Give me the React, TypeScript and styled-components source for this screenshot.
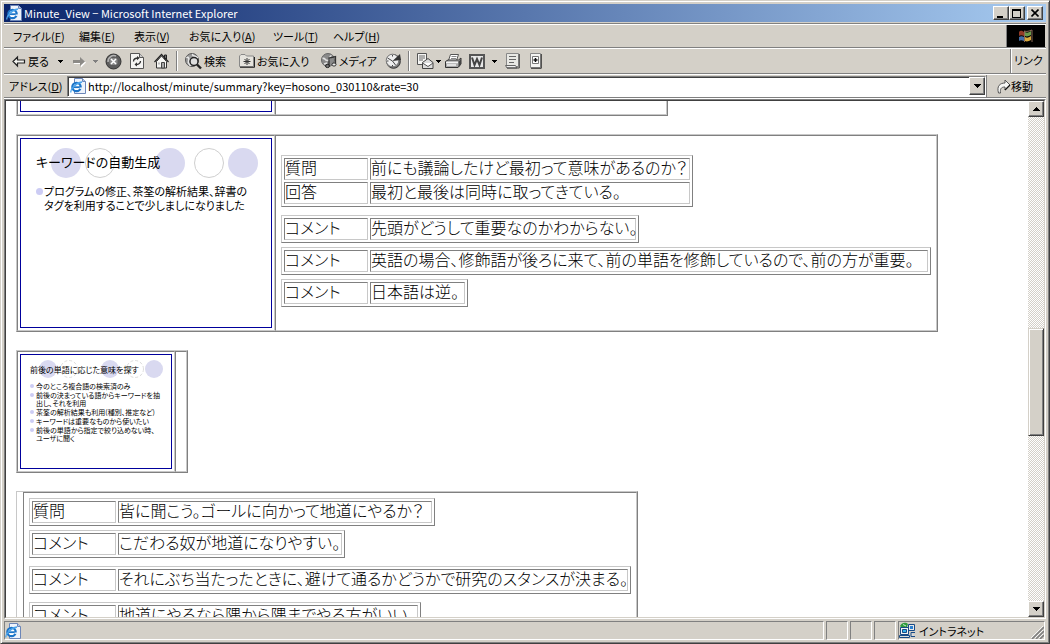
import React from "react";
import styled, { createGlobalStyle } from "styled-components";

const face = "#d4d0c8";
const shadow = "#808080";
const dark = "#404040";
const light = "#c8c8c8";

const GlobalStyle = createGlobalStyle`
  * { box-sizing: border-box; }
  body {
    margin: 0;
    background: ${face};
    color: #000;
    font-family: "Noto Sans CJK JP", sans-serif;
    font-size: 11px;
    font-feature-settings: "palt";
  }
  button, input { font: inherit; color: inherit; font-feature-settings: inherit; }
  button { padding: 0; margin: 0; border: 0; background: none; }
  svg { display: block; flex: none; }
`;

const Window = styled.div`
  display: flex;
  flex-direction: column;
  height: 100vh;
  padding: 2px;
  background: ${face};
  border: 1px solid;
  border-color: ${face} ${dark} ${dark} ${face};
  box-shadow: inset 1px 1px #fff, inset -1px -1px ${shadow};
  overflow: hidden;
`;

const Frame = styled.div`
  display: flex;
  flex-direction: column;
  flex: 1;
  min-height: 0;
  padding: 1px;
`;

const TitleBar = styled.header`
  display: flex;
  align-items: center;
  flex: none;
  height: 18px;
  margin-bottom: 1px;
  padding: 0 3px 0 2px;
  gap: 2px;
  color: #fff;
  background: linear-gradient(to right, #0a246a, #a6caf0);
`;

const Title = styled.h1`
  flex: 1;
  margin: 0;
  font-size: 11px;
  font-weight: normal;
  line-height: 18px;
`;

const Raised = styled.button<{ $w: number; $h: number }>`
  display: flex;
  align-items: center;
  justify-content: center;
  flex: none;
  width: ${(p) => p.$w}px;
  height: ${(p) => p.$h}px;
  background: ${face};
  border: 1px solid;
  border-color: #fff ${dark} ${dark} #fff;
  box-shadow: inset -1px -1px ${shadow};
`;

const WindowButtons = styled.div`
  display: flex;
  & > :last-child { margin-left: 2px; }
`;

const Band = styled.div<{ $h: number }>`
  display: flex;
  align-items: center;
  flex: none;
  height: ${(p) => p.$h}px;
  padding-right: 1px;
  border-top: 1px solid #fff;
  border-bottom: 1px solid ${shadow};
`;

const Bands = styled.div`
  flex: none;
  border-top: 1px solid ${shadow};
  border-bottom: 1px solid #fff;
`;

const Menu = styled.nav`
  display: flex;
  flex: 1;
  padding-left: 9px;
`;

const MenuItem = styled.button<{ $w: number }>`
  width: ${(p) => p.$w}px;
  height: 20px;
  line-height: 18px;
  text-align: left;
  white-space: nowrap;
`;

const Throbber = styled.div`
  display: flex;
  align-items: center;
  justify-content: center;
  width: 39px;
  height: 22px;
  background: #000;
  border-left: 1px solid ${shadow};
`;

const Tools = styled.div`
  display: flex;
  align-items: center;
  flex: 1;
  padding-left: 8px;
`;

const Tool = styled.button<{ $w: number }>`
  display: flex;
  align-items: center;
  flex: none;
  gap: 2px;
  width: ${(p) => p.$w}px;
  height: 22px;
  line-height: 22px;
  white-space: nowrap;
`;

const Divider = styled.div`
  width: 2px;
  height: 20px;
  margin-right: 7px;
  border-left: 1px solid ${shadow};
  border-right: 1px solid #fff;
`;

const Links = styled.div`
  width: 35px;
  height: 24px;
  padding-left: 3px;
  line-height: 22px;
  white-space: nowrap;
  border-left: 1px solid ${shadow};
  box-shadow: inset 1px 0 #fff;
`;

const AddressLabel = styled.label`
  width: 63px;
  padding-left: 5px;
  line-height: 20px;
  white-space: nowrap;
`;

const Combo = styled.div`
  display: flex;
  align-items: center;
  flex: 1;
  height: 21px;
  padding-left: 2px;
  gap: 2px;
  background: #fff;
  border: 1px solid;
  border-color: ${shadow} #fff #fff ${shadow};
  box-shadow: inset 1px 1px ${dark};
`;

const AddressInput = styled.input`
  flex: 1;
  min-width: 0;
  height: 19px;
  padding: 0;
  border: 0;
  outline: 0;
  background: transparent;
`;

const Go = styled.button`
  display: flex;
  align-items: center;
  width: 59px;
  height: 22px;
  padding-left: 10px;
  border-left: 1px solid ${shadow};
`;

const View = styled.div`
  display: flex;
  flex: 1;
  min-height: 0;
  border: 1px solid;
  border-color: ${shadow} #fff #fff ${shadow};
`;

const ViewInner = styled.div`
  display: flex;
  flex: 1;
  min-width: 0;
  border: 1px solid;
  border-color: ${dark} ${face} ${face} ${dark};
  background: #fff;
`;

const Page = styled.main`
  display: flex;
  flex-direction: column;
  align-items: flex-start;
  flex: 1;
  min-width: 0;
  gap: 18px;
  padding-left: 10px;
  overflow: hidden;
`;

const ScrollBar = styled.div`
  display: flex;
  flex-direction: column;
  width: 16px;
  background: repeating-conic-gradient(#fff 0 25%, ${face} 0 50%) 0 0 / 2px 2px;
`;

const ScrollTrack = styled.div`
  display: grid;
  flex: 1;
  grid-template-rows: 211fr 109fr 165fr;
`;

const ScrollThumb = styled.div`
  grid-row: 2;
  background: ${face};
  border: 1px solid;
  border-color: ${face} ${dark} ${dark} ${face};
  box-shadow: inset 1px 1px #fff, inset -1px -1px ${shadow};
`;

/* One minutes entry: slide thumbnail on the left, remarks on the right. */
const Entry = styled.section<{ $cut?: boolean }>`
  display: flex;
  flex: none;
  border: 1px solid;
  border-color: ${light} ${shadow} ${shadow} ${light};
  border-top-width: ${(p) => (p.$cut ? 0 : 1)}px;
`;

const Cell = styled.div<{ $cut?: boolean }>`
  padding: 2px;
  border: 1px solid;
  border-color: ${shadow} ${light} ${light} ${shadow};
  ${(p) => p.$cut && "border-top: 0; padding-top: 0;"}
`;

const EmptyCell = styled.div<{ $w: number }>`
  width: ${(p) => p.$w}px;
`;

const Remarks = styled(Cell)<{ $top: number; $right: number }>`
  display: flex;
  flex-direction: column;
  align-items: flex-start;
  padding: ${(p) => p.$top}px ${(p) => p.$right}px 5px 5px;
`;

const Remark = styled.table<{ $w: number; $gap?: number }>`
  table-layout: fixed;
  width: ${(p) => p.$w}px;
  margin-bottom: ${(p) => p.$gap ?? 4}px;
  border: 1px solid;
  border-color: ${light} ${shadow} ${shadow} ${light};
  border-collapse: separate;
  border-spacing: 2px;
  font-size: 16px;
  line-height: 16px;
  white-space: nowrap;

  th, td {
    height: 22px;
    padding: 0 0 4px;
    border: 1px solid;
    border-color: ${shadow} ${light} ${light} ${shadow};
    font-weight: 300;
    text-align: left;
  }
  th { width: 84px; }
`;

const Slide = styled.article<{ $w: number; $h: number; $cut?: boolean }>`
  display: grid;
  width: ${(p) => p.$w}px;
  height: ${(p) => p.$h}px;
  border: 1px solid #00009c;
  ${(p) => p.$cut && "border-top: 0;"}
  background: #fff;
  white-space: nowrap;
  overflow: hidden;

  & > * { grid-area: 1 / 1; }
`;

const SlideText = styled.div<{ $small?: boolean }>`
  padding: ${(p) => (p.$small ? "10px 0 0 9px" : "13px 0 0 15px")};
`;

const SlideTitle = styled.h2<{ $small?: boolean }>`
  margin: 0;
  font-size: ${(p) => (p.$small ? 8 : 13)}px;
  line-height: ${(p) => (p.$small ? 10 : 20)}px;
  font-weight: 400;
`;

const Bullets = styled.ul<{ $small?: boolean }>`
  margin: ${(p) => (p.$small ? "7px 0 0 0" : "12px 0 0 0")};
  padding: 0;
  list-style: none;
  font-size: ${(p) => (p.$small ? 7 : 11)}px;
  line-height: ${(p) => (p.$small ? 8 : 14)}px;
  font-weight: 400;
`;

const Bullet = styled.li<{ $small?: boolean }>`
  display: flex;
  gap: ${(p) => (p.$small ? 2 : 1)}px;
  margin-bottom: ${(p) => (p.$small ? 1 : 0)}px;
  &::before {
    content: "";
    flex: none;
    width: ${(p) => (p.$small ? 4 : 7)}px;
    height: ${(p) => (p.$small ? 4 : 7)}px;
    margin-top: ${(p) => (p.$small ? 2 : 4)}px;
    border-radius: 50%;
    background: #ccccf4;
  }
`;

const StatusBar = styled.footer`
  display: flex;
  flex: none;
  gap: 2px;
  height: 21px;
  padding: 2px 1px 0 0;
`;

const Panel = styled.div<{ $w?: number }>`
  display: flex;
  align-items: center;
  flex: ${(p) => (p.$w ? "none" : "1")};
  width: ${(p) => (p.$w ? p.$w + "px" : "auto")};
  gap: 3px;
  line-height: 16px;
  white-space: nowrap;
  border: 1px solid;
  border-color: ${shadow} #fff #fff ${shadow};

  & > :nth-child(3) { margin-left: auto; align-self: flex-end; }
`;

const Caret = ({ color = "#000", up = false }: { color?: string; up?: boolean }) => (
  <svg width="7" height="4" viewBox="0 0 7 4" shapeRendering="crispEdges">
    <path d={up ? "M3 0h1v1h1v1h1v1h1v1H0V3h1V2h1V1h1z" : "M0 0h7v1H6v1H5v1H4v1H3V3H2V2H1V1H0z"} fill={color} />
  </svg>
);

const SmallCaret = ({ color = "#000" }: { color?: string }) => (
  <svg width="5" height="3" viewBox="0 0 5 3" shapeRendering="crispEdges">
    <path d="M0 0h5v1H4v1H3v1H2V2H1V1H0z" fill={color} />
  </svg>
);

const PageIcon = () => (
  <svg width="16" height="16" viewBox="0 0 16 16">
    <path d="M4.500.5h8l3 3v12h-11z" fill="#eef3fb" stroke="#6c86b8" />
    <path d="M12.500.5v3h3" fill="#b7c9e8" stroke="#6c86b8" />
    <circle cx="6.500" cy="9" r="4.200" fill="#fff" stroke="#1c74c8" strokeWidth="2.200" />
    <path d="M3 9.200h8" stroke="#1c74c8" strokeWidth="1.800" />
    <path d="M9.500 10.200h3" stroke="#eef3fb" strokeWidth="1.400" />
    <path d="M1 14.500C0 12 5 5 12 4" fill="none" stroke="#4aa4ec" strokeWidth="1.300" />
  </svg>
);

const Arrow = ({ back = false }: { back?: boolean }) => (
  <svg width="14" height="13" viewBox="0 0 14 13">
    {back ? (
      <path d="M1 6.500 5.500 2v3h7v3h-7v3z" fill="#f4f4f0" stroke="#222" strokeWidth="1.200" />
    ) : (
      <>
        <path d="M14 7.500 9 3v3H2v3h7v3.500z" fill="#fff" />
        <path d="M13 6.500 8 2v3H1v3h7v3z" fill="#8c8a86" />
      </>
    )}
  </svg>
);

const StopIcon = () => (
  <svg width="17" height="17" viewBox="0 0 17 17">
    <circle cx="8.500" cy="8.500" r="7.500" fill="#5c5c5c" stroke="#333" />
    <path d="M3 9a6 6 0 0 1 8-6" fill="none" stroke="#b4b4b4" strokeWidth="1.500" />
    <rect x="4.500" y="5" width="8" height="7" rx="2" fill="#8a8a8a" />
    <path d="m6 6 5 5m0-5-5 5" stroke="#fff" strokeWidth="1.500" />
  </svg>
);

const RefreshIcon = () => (
  <svg width="14" height="16" viewBox="0 0 14 16">
    <path d="M.5.5h9l4 4v11H.5z" fill="#f4f4f2" stroke="#555" />
    <path d="M9.500.5v4h4" fill="#ccc" stroke="#555" />
    <path d="M3.500 8.500c0-3 2-3.500 5-3.500M10.500 8c0 3-2 3.500-5 3.500" fill="none" stroke="#333" strokeWidth="1.300" />
    <path d="m7 3 2.500 2L7 7.200zM7 9.300 4.500 11.500 7 13.600z" fill="#333" />
  </svg>
);

const HomeIcon = () => (
  <svg width="15" height="16" viewBox="0 0 15 16">
    <path d="M10.500 2h2v4h-2z" fill="#777" stroke="#222" />
    <path d="M2.500 8.500 7.500 3l5 5.500v6.500h-10z" fill="#f5f5f2" stroke="#333" />
    <path d="M.5 9 7.500 1.500 14.500 9" fill="none" stroke="#222" strokeWidth="1.200" />
    <path d="M7.500 9.500h3V15h-3z" fill="#aaa" stroke="#444" />
    <path d="M4 9.500h2v2H4z" fill="#bbb" />
  </svg>
);

const SearchIcon = () => (
  <svg width="17" height="17" viewBox="0 0 17 17">
    <circle cx="7" cy="7" r="6.500" fill="#999" stroke="#555" />
    <path d="M1.500 5c2-2 3 1 2 3s1 3 2 5M8 1c-2 2 4 2 5 4" fill="none" stroke="#e8e8e8" strokeWidth="1.500" />
    <circle cx="9" cy="8.500" r="4" fill="#dedede" stroke="#222" strokeWidth="1.400" />
    <path d="m12 11.500 4 4" stroke="#222" strokeWidth="2.400" />
  </svg>
);

const FavoritesIcon = () => (
  <svg width="16" height="14" viewBox="0 0 16 14">
    <path d="M.5 12.500V2L2 .5h4L7.500 2h7v10.500z" fill="#e6e4de" stroke="#888" />
    <path d="M1 13.300h14.500V3" fill="none" stroke="#222" />
    <path d="M8 4v7M4.500 7.500h7M5.500 5l5 5m0-5-5 5" stroke="#333" />
  </svg>
);

const MediaIcon = () => (
  <svg width="16" height="16" viewBox="0 0 16 16">
    <circle cx="7" cy="7" r="6.500" fill="#8a8a8a" stroke="#666" />
    <path d="M1.500 5.500c3-1 2 2 5 2s1-4 4-5M3 11l3-1" fill="none" stroke="#e0e0e0" strokeWidth="1.600" />
    <path d="M8 12.500V5l6.500-1.500v8" fill="none" stroke="#333" strokeWidth="1.300" />
    <ellipse cx="6.500" cy="13" rx="2" ry="1.600" fill="#777" stroke="#222" />
    <ellipse cx="13" cy="11.500" rx="2" ry="1.600" fill="#eee" stroke="#333" />
  </svg>
);

const HistoryIcon = () => (
  <svg width="17" height="16" viewBox="0 0 17 16">
    <circle cx="8.500" cy="8.500" r="6.800" fill="#777" stroke="#333" />
    <circle cx="7.500" cy="7.500" r="6.300" fill="#eee" stroke="#777" />
    <path d="M7.500 8 15 1l1 6z" fill="#333" />
    <path d="m7.500 8-5-3M7.500 8l3 4M7.500 2v1.500M7.500 12v1.500M2 8h1.500" stroke="#444" />
  </svg>
);

const MailIcon = () => (
  <svg width="17" height="16" viewBox="0 0 17 16">
    <path d="M.5.5h9v11h-9z" fill="#f6f6f4" stroke="#555" />
    <path d="M2 3h6M2 5h6M2 7h4" stroke="#666" />
    <path d="M5.500 9.500 11 5.500l5 4v6H5.500z" fill="#ddd" stroke="#444" />
    <path d="m5.500 10 5.500 3.500L16 10" fill="#fff" stroke="#555" />
  </svg>
);

const PrintIcon = () => (
  <svg width="17" height="15" viewBox="0 0 17 15">
    <path d="M5.500.5h8l-2 6h-8z" fill="#fff" stroke="#555" />
    <path d="M6.500 2.500h5M6 4.500h5" stroke="#888" />
    <path d="M.5 7.500 3 6h10.500l2.500-2v6l-3 3.500H.5z" fill="#aaa" stroke="#333" />
    <path d="M1 8.500h12M2 11h9" stroke="#f3f3f3" strokeWidth="1.500" />
    <path d="M13.500 7.500v6l2.500-3V5z" fill="#444" />
  </svg>
);

const WordIcon = () => (
  <svg width="16" height="15" viewBox="0 0 16 15">
    <path d="M0 0h16v15H0z" fill="#555" />
    <path d="M2 2h12v11H2z" fill="#e8e8e8" />
    <path d="m3 3.500 2.500 7.500L8 5l2.500 6L13 3.500" fill="none" stroke="#444" strokeWidth="2" />
  </svg>
);

const DiscussIcon = () => (
  <svg width="15" height="16" viewBox="0 0 15 16">
    <path d="M1.500.5h12v13h-12z" fill="#e8e8e4" stroke="#888" />
    <path d="M.5 12.500h10l1.500 2.500H2z" fill="#eee" stroke="#666" />
    <path d="M14.300 1v14H2" fill="none" stroke="#444" />
    <path d="M4 3.500h7M4 6.500h7M4 9.500h5" stroke="#666" />
  </svg>
);

const MessengerIcon = () => (
  <svg width="12" height="16" viewBox="0 0 12 16">
    <path d="M.5.5h10v14H.5z" fill="#f4f4f2" stroke="#888" />
    <path d="M11.300 1v14.300H1" fill="none" stroke="#333" />
    <path d="M2.500 3.500h6v7h-6z" fill="#fff" stroke="#777" />
    <path d="M5.500 5v4M3.500 7h4" stroke="#111" strokeWidth="1.500" />
  </svg>
);

const GoIcon = () => (
  <svg width="14" height="15" viewBox="0 0 14 15">
    <path d="M1.500 14C-.5 7 3 4 8 4V1l5 5-5 5V8C4 8 3 10 3.500 14z" fill="#f6f6f4" stroke="#555" />
    <path d="m8 11 5-5" stroke="#111" strokeWidth="1.300" />
  </svg>
);

const FlagIcon = () => (
  <svg width="20" height="16" viewBox="0 0 20 16">
    <path d="M3 4c2-2 3-1 5 0v4c-2-1-4-1-5 0z" fill="#b84830" opacity=".8" />
    <path d="M9 4c2 1 3 1 6-1v4c-2 1-4 2-6 1z" fill="#6a9a4c" />
    <path d="M3 9c2-1 3-1 5 0v4c-2-1-4-1-5 0z" fill="#4a78b8" opacity=".9" />
    <path d="M9 9c2 1 3 1 6-1v4c-2 1-4 2-6 1z" fill="#d8a83c" />
    <path d="M8 3c3 1 5 0 8-1v12M8.500 3v11" fill="none" stroke="#8a6a58" />
  </svg>
);

const IntranetIcon = () => (
  <svg width="17" height="17" viewBox="0 0 17 17">
    <path d="M1 4C3 0 7 0 9 2L8 5H2z" fill="#2f9a3c" />
    <path d="M4 2.500 7 4" stroke="#c6ecd0" />
    <path d="M9.500 2.500h6v6h-6z" fill="#e8e8e8" stroke="#174a86" />
    <path d="M11 4h3v3h-3z" fill="#2a7fd0" />
    <path d="M1.500 5.500h8v7h-8z" fill="#f2f2f2" stroke="#174a86" />
    <path d="M3.500 7.500h4v3h-4z" fill="#38b0e8" stroke="#174a86" />
    <path d="M.5 13.500h10v2H.5zM12 10.500h4M12 10.500v4h4" fill="#ddd" stroke="#174a86" />
  </svg>
);

const Grip = () => (
  <svg width="13" height="13" viewBox="0 0 13 13">
    <path d="M1 13 13 1M5 13l8-8M9 13l4-4" stroke="#808080" strokeWidth="1.600" />
    <path d="M0 12 12 0M4 12l8-8M8 12l4-4" stroke="#fff" strokeWidth=".8" />
  </svg>
);

const menus = [
  { label: "ファイル", key: "F", w: 66 },
  { label: "編集", key: "E", w: 55 },
  { label: "表示", key: "V", w: 55 },
  { label: "お気に入り", key: "A", w: 84 },
  { label: "ツール", key: "T", w: 60 },
  { label: "ヘルプ", key: "H", w: 60 },
];

type Table = { w: number; gap?: number; rows: [string, string][] };

const keywordRemarks: Table[] = [
  {
    w: 412,
    gap: 8,
    rows: [
      ["質問", "前にも議論したけど最初って意味があるのか？"],
      ["回答", "最初と最後は同時に取ってきている。"],
    ],
  },
  { w: 358, rows: [["コメント", "先頭がどうして重要なのかわからない。"]] },
  { w: 650, rows: [["コメント", "英語の場合、修飾語が後ろに来て、前の単語を修飾しているので、前の方が重要。"]] },
  { w: 187, rows: [["コメント", "日本語は逆。"]] },
];

const stanceRemarks: Table[] = [
  { w: 406, rows: [["質問", "皆に聞こう。ゴールに向かって地道にやるか？"]] },
  { w: 316, gap: 8, rows: [["コメント", "こだわる奴が地道になりやすい。"]] },
  { w: 602, gap: 8, rows: [["コメント", "それにぶち当たったときに、避けて通るかどうかで研究のスタンスが決まる。"]] },
  { w: 392, rows: [["コメント", "地道にやるなら隅から隅までやる方がいい。"]] },
];

const RemarkTables = ({ tables }: { tables: Table[] }) => (
  <>
    {tables.map((t) => (
      <Remark key={t.rows[0][1]} $w={t.w} $gap={t.gap}>
        <tbody>
          {t.rows.map(([kind, text]) => (
            <tr key={text}>
              <th scope="row">{kind}</th>
              <td>{text}</td>
            </tr>
          ))}
        </tbody>
      </Remark>
    ))}
  </>
);

export default function App() {
  return (
    <>
      <GlobalStyle />
      <Window lang="ja">
        <Frame>
          <TitleBar>
            <PageIcon />
            <Title>Minute_View − Microsoft Internet Explorer</Title>
            <WindowButtons>
              <Raised $w={16} $h={14} aria-label="最小化">
                <svg width="10" height="9" viewBox="0 0 10 9"><path d="M1 7h6v2H1z" /></svg>
              </Raised>
              <Raised $w={16} $h={14} aria-label="最大化">
                <svg width="10" height="9" viewBox="0 0 10 9"><path d="M0 0h9v9H0zM1 2v6h7V2z" fillRule="evenodd" /></svg>
              </Raised>
              <Raised $w={16} $h={14} aria-label="閉じる">
                <svg width="8" height="8" viewBox="0 0 8 8"><path d="m.5.5 7 7m0-7-7 7" stroke="#000" strokeWidth="1.600" /></svg>
              </Raised>
            </WindowButtons>
          </TitleBar>

          <Bands>
            <Band $h={24}>
              <Menu>
                {menus.map((m) => (
                  <MenuItem key={m.key} $w={m.w}>
                    {m.label}(<u>{m.key}</u>)
                  </MenuItem>
                ))}
              </Menu>
              <Throbber><FlagIcon /></Throbber>
            </Band>

            <Band $h={26}>
              <Tools>
                <Tool $w={46}><Arrow back />戻る</Tool>
                <Tool $w={14} aria-label="戻る履歴"><SmallCaret /></Tool>
                <Tool $w={21} aria-label="進む"><Arrow /></Tool>
                <Tool $w={12} aria-label="進む履歴"><SmallCaret color="#808080" /></Tool>
                <Tool $w={25} aria-label="中止"><StopIcon /></Tool>
                <Tool $w={24} aria-label="更新"><RefreshIcon /></Tool>
                <Tool $w={22} aria-label="ホーム"><HomeIcon /></Tool>
                <Divider />
                <Tool $w={54}><SearchIcon />検索</Tool>
                <Tool $w={82}><FavoritesIcon />お気に入り</Tool>
                <Tool $w={64}><MediaIcon />メディア</Tool>
                <Tool $w={23} aria-label="履歴"><HistoryIcon /></Tool>
                <Divider />
                <Tool $w={28} aria-label="メール"><MailIcon /><SmallCaret /></Tool>
                <Tool $w={24} aria-label="印刷"><PrintIcon /></Tool>
                <Tool $w={23} aria-label="編集"><WordIcon /></Tool>
                <Tool $w={13} aria-label="編集オプション"><SmallCaret /></Tool>
                <Tool $w={25} aria-label="ディスカッション"><DiscussIcon /></Tool>
                <Tool $w={20} aria-label="メッセンジャー"><MessengerIcon /></Tool>
              </Tools>
              <Links>リンク</Links>
            </Band>

            <Band $h={24}>
              <AddressLabel htmlFor="address">アドレス(<u>D</u>)</AddressLabel>
              <Combo>
                <PageIcon />
                <AddressInput
                  id="address"
                  defaultValue="http://localhost/minute/summary?key=hosono_030110&rate=30"
                />
                <Raised $w={16} $h={18} aria-label="アドレス一覧"><Caret /></Raised>
              </Combo>
              <Go><GoIcon />移動</Go>
            </Band>
          </Bands>

          <View>
            <ViewInner>
              <Page>
                <Entry $cut>
                  <Cell $cut><Slide $w={252} $h={11} $cut /></Cell>
                  <Cell $cut><EmptyCell $w={386} /></Cell>
                </Entry>

                <Entry>
                  <Cell>
                    <Slide $w={252} $h={190}>
                      <svg width="250" height="188" viewBox="0 0 250 188">
                        <g fill="#d9d9f0">
                          <circle cx="45" cy="24" r="15" />
                          <circle cx="149" cy="24" r="15" />
                          <circle cx="222" cy="24" r="15" />
                        </g>
                        <g fill="none" stroke="#cfcfcf">
                          <circle cx="79" cy="24" r="14.500" />
                          <circle cx="188" cy="24" r="14.500" />
                        </g>
                      </svg>
                      <SlideText>
                        <SlideTitle>キーワードの自動生成</SlideTitle>
                        <Bullets>
                          <Bullet>
                            <span>
                              プログラムの修正、茶筌の解析結果、辞書の
                              <br />
                              タグを利用することで少しましになりました
                            </span>
                          </Bullet>
                        </Bullets>
                      </SlideText>
                    </Slide>
                  </Cell>
                  <Remarks $top={19} $right={5}>
                    <RemarkTables tables={keywordRemarks} />
                  </Remarks>
                </Entry>

                <Entry>
                  <Cell>
                    <Slide $w={152} $h={115}>
                      <svg width="150" height="113" viewBox="0 0 150 113">
                        <g fill="#d9d9f0">
                          <circle cx="27" cy="14" r="9" />
                          <circle cx="89" cy="14" r="9" />
                          <circle cx="133" cy="14" r="9" />
                        </g>
                        <g fill="none" stroke="#dcdcdc" strokeDasharray="3 2">
                          <circle cx="48" cy="14" r="8.500" />
                          <circle cx="114" cy="14" r="8.500" />
                        </g>
                      </svg>
                      <SlideText $small>
                        <SlideTitle $small>前後の単語に応じた意味を探す</SlideTitle>
                        <Bullets $small>
                          <Bullet $small>今のところ複合語の検索済のみ</Bullet>
                          <Bullet $small>
                            <span>
                              前後の決まっている語からキーワードを抽
                              <br />
                              出し、それを利用
                            </span>
                          </Bullet>
                          <Bullet $small>茶筌の解析結果も利用(種別、推定など)</Bullet>
                          <Bullet $small>キーワードは重要なものから使いたい</Bullet>
                          <Bullet $small>
                            <span>
                              前後の単語から指定で絞り込めない時、
                              <br />
                              ユーザに聞く
                            </span>
                          </Bullet>
                        </Bullets>
                      </SlideText>
                    </Slide>
                  </Cell>
                  <Cell><EmptyCell $w={6} /></Cell>
                </Entry>

                <Entry>
                  <EmptyCell $w={6} />
                  <Remarks $top={5} $right={5}>
                    <RemarkTables tables={stanceRemarks} />
                  </Remarks>
                </Entry>
              </Page>

              <ScrollBar>
                <Raised $w={16} $h={16} aria-label="上へスクロール"><Caret up /></Raised>
                <ScrollTrack><ScrollThumb /></ScrollTrack>
                <Raised $w={16} $h={16} aria-label="下へスクロール"><Caret /></Raised>
              </ScrollBar>
            </ViewInner>
          </View>

          <StatusBar>
            <Panel><PageIcon /></Panel>
            <Panel $w={22} />
            <Panel $w={22} />
            <Panel $w={22} />
            <Panel $w={147}>
              <IntranetIcon />
              <span>イントラネット</span>
              <Grip />
            </Panel>
          </StatusBar>
        </Frame>
      </Window>
    </>
  );
}
